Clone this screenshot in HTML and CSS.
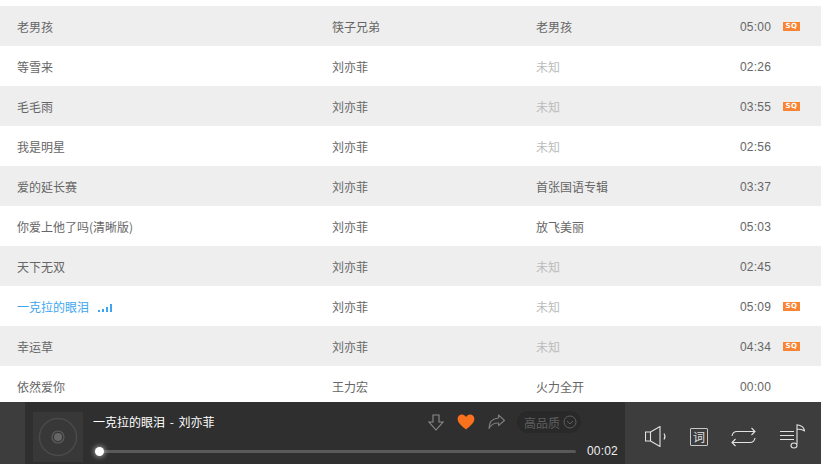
FILE: index.html
```html
<!DOCTYPE html>
<html lang="zh">
  <head>
    <meta charset="UTF-8" />
    <title>播放列表</title>
    <link rel="stylesheet" href="styles.css">
  </head>
  <body>
    <div class="list">
      <div class="row odd"><span class="name">老男孩</span><span>筷子兄弟</span><span>老男孩</span><span class="time">05:00</span><span class="sq">SQ</span></div>
      <div class="row"><span class="name">等雪来</span><span>刘亦菲</span><span class="none">未知</span><span class="time">02:26</span></div>
      <div class="row odd"><span class="name">毛毛雨</span><span>刘亦菲</span><span class="none">未知</span><span class="time">03:55</span><span class="sq">SQ</span></div>
      <div class="row"><span class="name">我是明星</span><span>刘亦菲</span><span class="none">未知</span><span class="time">02:56</span></div>
      <div class="row odd"><span class="name">爱的延长赛</span><span>刘亦菲</span><span>首张国语专辑</span><span class="time">03:37</span></div>
      <div class="row"><span class="name">你爱上他了吗(清晰版)</span><span>刘亦菲</span><span>放飞美丽</span><span class="time">05:03</span></div>
      <div class="row odd"><span class="name">天下无双</span><span>刘亦菲</span><span class="none">未知</span><span class="time">02:45</span></div>
      <div class="row">
        <span class="name playing">一克拉的眼泪
          <svg class="bars" width="14" height="8" viewBox="0 0 14 8"><path d="M0 6h2v2H0zM4 5h2v3H4zM8 3h2v5H8zM12 0h2v8h-2z" fill="#3ea6f0"/></svg>
        </span>
        <span>刘亦菲</span><span class="none">未知</span><span class="time">05:09</span><span class="sq">SQ</span>
      </div>
      <div class="row odd"><span class="name">幸运草</span><span>刘亦菲</span><span class="none">未知</span><span class="time">04:34</span><span class="sq">SQ</span></div>
      <div class="row"><span class="name">依然爱你</span><span>王力宏</span><span>火力全开</span><span class="time">00:00</span></div>
    </div>

    <div class="player">
      <div class="main">
        <div class="cover">
          <svg width="50" height="50" viewBox="0 0 50 50" fill="none">
            <circle cx="25" cy="25" r="18.5" stroke="#4a4a4a" stroke-width="1.5"/>
            <circle cx="25" cy="25" r="6" stroke="#5c5c5c" stroke-width="1.2"/>
            <circle cx="25" cy="25" r="4" fill="#666"/>
          </svg>
        </div>
        <div class="info">
          <div class="top">
            <div class="title">一克拉的眼泪 - 刘亦菲</div>
            <div class="actions">
              <svg width="16" height="17" viewBox="0 0 16 17" fill="none"><path d="M5 1h6v7h4l-7 8-7-8h4z" stroke="#8c8c8c" stroke-width="1.1"/></svg>
              <svg width="18" height="16" viewBox="0 0 18 16"><path d="M9 15.500C4 11.500.6 8.600.6 5 .6 2.400 2.600.6 5 .6c1.700 0 3.100.9 4 2.400C9.900 1.500 11.300.6 13 .6c2.400 0 4.400 1.800 4.400 4.400 0 3.600-3.400 6.500-8.400 10.500z" fill="#f9711c"/></svg>
              <svg width="17" height="16" viewBox="0 0 17 16" fill="none"><path d="M10.500 1l6 5.500-6 5V9C6 8.800 3 10.500 1 14.500 1 8.500 4.500 4.500 10.500 4z" stroke="#7d7d7d" stroke-width="1.1" stroke-linejoin="round"/></svg>
              <span class="quality">高品质
                <svg width="14" height="14" viewBox="0 0 14 14" fill="none"><circle cx="7" cy="7" r="6" stroke="#5f5f5f"/><path d="M4 6l3 3 3-3" stroke="#5f5f5f"/></svg>
              </span>
            </div>
          </div>
          <div class="progress">
            <div class="track"><span class="knob"></span></div>
            <span class="now">00:02</span>
          </div>
        </div>
      </div>
      <div class="tools">
        <svg width="22" height="21" viewBox="0 0 22 21" fill="none" stroke="#e2e2e2" stroke-width="1.1"><path d="M.5 6h5v9h-5zM5.500 6L15 .5v20L5.500 15"/><path d="M19 7.500c1.200 1.800 1.200 4.200 0 6"/></svg>
        <span class="lyric">词</span>
        <svg width="25" height="20" viewBox="0 0 25 20" fill="none" stroke="#e2e2e2" stroke-width="1.100"><path d="M1 9c.5-3 2.500-4.500 5-4.500h18M20.500 1L24 4.500 20.500 8M24 11c-.5 3-2.500 4.500-5 4.500H1M4.500 12L1 15.500 4.500 19"/></svg>
        <svg width="26" height="25" viewBox="0 0 26 25" fill="none" stroke="#e2e2e2" stroke-width="1.100"><path d="M1 7.500h14M1 11.500h14M1 15.500h14"/><path d="M18 20V.8c3.500.5 7 2.300 7.500 6-2-1.300-4.500-1.800-7.500-1.800"/><ellipse cx="15" cy="21.500" rx="3" ry="2.500"/></svg>
      </div>
    </div>
  </body>
</html>
```

FILE: styles.css
```css
html, body {
  height: 100%;
}
body {
  margin: 0;
  width: 821px;
  height: 464px;
  overflow: hidden;
  display: flex;
  flex-direction: column;
  background-color: #fff;
  font-family: "Noto Sans CJK SC", "Liberation Sans", sans-serif;
  font-size: 12px;
  color: #666;
}

.list {
  flex: 1;
  min-height: 0;
  padding-top: 6px;
  overflow: hidden;
}
.row {
  display: grid;
  grid-template-columns: 315px 204px 204px 43px 17px;
  align-items: center;
  height: 40px;
  padding-left: 17px;
}
.row.odd {
  background-color: #eee;
}
.none {
  color: #bbb;
}
.time {
  padding-top: 1px;
  font-family: "Liberation Sans", sans-serif;
  font-size: 12px;
  letter-spacing: 0.2px;
}
.sq {
  display: block;
  width: 17px;
  height: 9px;
  line-height: 9px;
  text-align: center;
  background-color: #f88537;
  color: #fff;
  font-family: "DejaVu Sans", sans-serif;
  font-size: 7px;
  font-weight: bold;
  letter-spacing: 0.5px;
}
.playing {
  color: #3ea6f0;
}
.bars {
  margin-left: 6px;
}

.player {
  flex: none;
  height: 62px;
  display: flex;
  background-color: #3d3d3d;
  color: #fff;
}
.main {
  width: 600px;
  margin-left: 25px;
  padding: 10px 7px 2px 8px;
  box-sizing: border-box;
  display: flex;
  gap: 10px;
  background-color: #2f2f2f;
}
.cover {
  width: 50px;
  height: 50px;
  background-color: #383838;
}
.info {
  flex: 1;
  display: flex;
  flex-direction: column;
}
.top {
  display: flex;
  justify-content: space-between;
  height: 28px;
}
.title {
  font-size: 12px;
  line-height: 20px;
  word-spacing: 2px;
}
.actions {
  display: flex;
  align-items: center;
  gap: 13px;
  height: 20px;
  margin-right: 37px;
}
.quality {
  display: flex;
  align-items: center;
  gap: 3px;
  height: 22px;
  margin-left: -1px;
  padding: 0 4px 0 7px;
  border-radius: 11px;
  background-color: #292929;
  color: #5f5f5f;
}
.progress {
  display: flex;
  align-items: center;
  gap: 11px;
  margin-top: 4px;
}
.track {
  flex: 1;
  height: 3px;
  border-radius: 2px;
  background-color: #595959;
  position: relative;
  margin-left: 3px;
}
.knob {
  position: absolute;
  left: -1px;
  top: -3px;
  width: 9px;
  height: 9px;
  border-radius: 50%;
  background-color: #fff;
  box-shadow: 0 0 5px 1px rgba(255, 255, 255, 0.5);
}
.now {
  font-family: "Liberation Sans", sans-serif;
  font-size: 12px;
  letter-spacing: 0.2px;
  color: #eee;
}

.tools {
  flex: 1;
  display: flex;
  align-items: center;
  gap: 23px;
  padding: 7px 0 0 20px;
}
.lyric {
  width: 16px;
  height: 16px;
  line-height: 16px;
  text-align: center;
  border: 1px solid #c8c8c8;
  border-radius: 1px;
  color: #e2e2e2;
  font-size: 12px;
}
```
